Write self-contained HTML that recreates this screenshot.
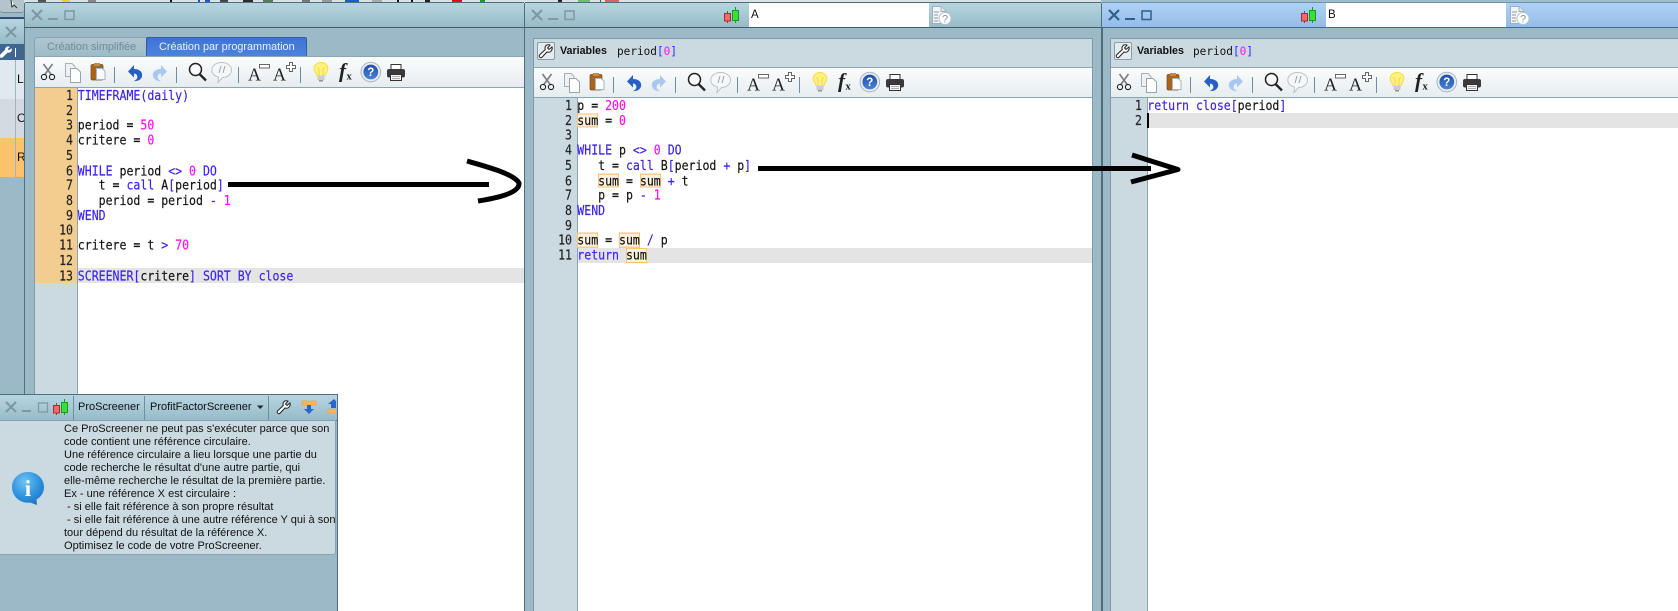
<!DOCTYPE html>
<html><head><meta charset="utf-8"><style>
html,body{margin:0;padding:0}
body{width:1678px;height:611px;overflow:hidden;position:relative;background:#9bb9c7;font-family:"Liberation Sans",sans-serif;color:#111}
.a{position:absolute}
.tb{position:absolute;height:24px;background:linear-gradient(#b6d5e1,#98bbc9);border-top:1px solid #4e6e7e;border-bottom:1px solid #3f5f6e;box-sizing:content-box}
.mono{font-family:"DejaVu Sans Mono","Liberation Mono",monospace;font-size:11.56px;line-height:15px;white-space:pre;color:#111}
.code{line-height:12.712px;transform:scaleY(1.18);transform-origin:0 0;-webkit-text-stroke:.15px currentColor}
.ln{text-align:right;color:#222}
.k{color:#3a22f5}.n{color:#ff10f0}
.s{display:inline-block;height:12.712px;line-height:12.712px;background:#fcf1df;box-shadow:inset 0 0 0 1px #fcc27a}
.panel{background:#cbdae1}
.var{background:#cbdae1;border:1px solid #7d9bab;border-bottom:1px solid #9db5c1;box-sizing:border-box}
.bar{background:linear-gradient(#fbfcfc,#e6edf0);border-top:1px solid #8aa6b3;border-bottom:1px solid #8aa6b3;box-sizing:border-box}
</style></head><body>

<!-- top strip -->
<div class="a" style="left:0;top:0;width:1678px;height:3px;background:#d9e2e6"></div>
<div class="a" style="left:1101px;top:0;width:577px;height:3px;background:#9fbccb"></div>
<div class="a" style="left:38px;top:0;width:8px;height:2px;background:#555"></div>
<div class="a" style="left:62px;top:0;width:8px;height:2px;background:#f1cf2e"></div>
<div class="a" style="left:88px;top:0;width:8px;height:2px;background:#888"></div>
<div class="a" style="left:170px;top:0;width:2px;height:3px;background:#111"></div>
<div class="a" style="left:198px;top:0;width:2px;height:3px;background:#1b54d0"></div>
<div class="a" style="left:205px;top:0;width:5px;height:2px;background:#2256c8"></div>
<div class="a" style="left:220px;top:0;width:8px;height:2px;background:#444"></div>
<div class="a" style="left:243px;top:0;width:10px;height:2px;background:#2b2b2b"></div>
<div class="a" style="left:263px;top:0;width:10px;height:2px;background:#557f55"></div>
<div class="a" style="left:302px;top:0;width:8px;height:2px;background:#777"></div>
<div class="a" style="left:322px;top:0;width:10px;height:2px;background:#999"></div>
<div class="a" style="left:345px;top:0;width:14px;height:2px;background:#1d5ad8"></div>
<div class="a" style="left:372px;top:0;width:10px;height:2px;background:#aaa"></div>
<div class="a" style="left:397px;top:0;width:2px;height:3px;background:#111"></div>
<div class="a" style="left:411px;top:0;width:2px;height:3px;background:#111"></div>
<div class="a" style="left:425px;top:0;width:5px;height:2px;background:#222"></div>
<div class="a" style="left:452px;top:0;width:10px;height:2px;background:#e01010"></div>
<div class="a" style="left:480px;top:0;width:5px;height:2px;background:#1b9a20"></div>
<div class="a" style="left:558px;top:0;width:4px;height:3px;background:#222"></div>
<div class="a" style="left:578px;top:0;width:12px;height:2px;background:#6ec06a"></div>
<div class="a" style="left:600px;top:0;width:1px;height:3px;background:#555"></div>
<div class="a" style="left:605px;top:0;width:14px;height:2px;background:#e06060"></div>

<!-- left background window -->
<div class="a" style="left:0;top:0;width:24px;height:13px;background:#b4c4cc;border-bottom:1px solid #7b919c;border-radius:0 0 3px 3px;box-sizing:border-box"></div>
<svg class="a" style="left:9px;top:0" width="10" height="9"><path d="M2 0 L3 7 L5 5 L8 8" fill="#fff" stroke="#333" stroke-width="1"/></svg>
<div class="a" style="left:0;top:17px;width:24px;height:2px;background:#2f4f73"></div>
<div class="a" style="left:0;top:19px;width:24px;height:25px;background:linear-gradient(#b6d5e1,#98bbc9)"></div>
<svg class="a" style="left:5px;top:26px" width="12" height="12"><path d="M1 1L11 11M11 1L1 11" stroke="#7f98a4" stroke-width="2.2"/></svg>
<div class="a" style="left:0;top:44px;width:24px;height:16px;background:#3f668f"></div>
<svg class="a" style="left:0;top:46px" width="12" height="12"><path d="M11.500 2.500L9 4.500 7.500 3 9.700 1C7.500-.2 5 1.500 5.200 3.800L0 9V11.500H2.500L7.500 6.500C10 7 12.500 5 11.500 2.500Z" fill="#fff" stroke="#dfe7ee" stroke-width=".5"/></svg>
<div class="a" style="left:15px;top:48px;width:1px;height:9px;background:#fff"></div>
<div class="a" style="left:0;top:60px;width:24px;height:39px;background:#dfe9ee"></div>
<div class="a" style="left:0;top:99px;width:24px;height:39px;background:#d3dae1"></div>
<div class="a" style="left:0;top:138px;width:24px;height:39px;background:#fdc26c"></div>
<div class="a" style="left:15px;top:60px;width:1px;height:117px;background:#a3b4bd"></div>
<div class="a" style="left:17px;top:72px;width:7px;height:15px;overflow:hidden;font-size:12px;line-height:15px">L</div>
<div class="a" style="left:17px;top:111px;width:7px;height:15px;overflow:hidden;font-size:12px;line-height:15px">O</div>
<div class="a" style="left:17px;top:150px;width:7px;height:15px;overflow:hidden;font-size:12px;line-height:15px">R</div>

<!-- window 1 -->
<div class="tb" style="left:25px;top:2px;width:499px"></div>
<div class="a" style="left:34px;top:37px;width:113px;height:19px;background:linear-gradient(#afc6d1,#9fbbc8);border:1px solid #86a3b1;border-bottom:0;border-radius:3px 0 0 0;box-sizing:border-box;color:#6e8c9b;font-size:10.85px;line-height:18px;padding-left:12px;white-space:nowrap">Création simplifiée</div>
<div class="a" style="left:146px;top:37px;width:161px;height:19px;background:linear-gradient(#3f74d6,#4b82e0);border:1px solid #2f5ea8;border-bottom:0;border-radius:2px 2px 0 0;box-sizing:border-box;color:#e9f1fb;font-size:10.85px;line-height:18px;padding-left:12px;white-space:nowrap">Création par programmation</div>
<div class="a panel" style="left:34px;top:56px;width:490px;height:555px;border-left:1px solid #7d9bab;box-sizing:border-box"></div>
<div class="a bar" style="left:35px;top:56px;width:489px;height:32px"></div>
<div class="a" style="left:35px;top:88px;width:42px;height:195px;background:#f2cd8f"></div>
<div class="a" style="left:77px;top:88px;width:447px;height:523px;background:#fff;border-left:1px solid #8aa6b3;box-sizing:border-box"></div>
<div class="a" style="left:78px;top:268px;width:446px;height:15px;background:#e4e4e4"></div>
<div class="a mono code ln" style="left:35px;top:88px;width:38px">1
2
3
4
5
6
7
8
9
10
11
12
13</div>
<div class="a mono code" style="left:77.800px;top:88px"><span class="k">TIMEFRAME(daily)</span>

period = <span class="n">50</span>
critere = <span class="n">0</span>

<span class="k">WHILE</span> period <span class="k">&lt;&gt;</span> <span class="n">0</span> <span class="k">DO</span>
   t = <span class="k">call</span> A<span class="k">[</span>period<span class="k">]</span>
   period = period <span class="k">-</span> <span class="n">1</span>
<span class="k">WEND</span>

critere = t <span class="k">&gt;</span> <span class="n">70</span>

<span class="k">SCREENER[</span>critere<span class="k">]</span> <span class="k">SORT BY close</span></div>
<div class="a" style="left:24px;top:3px;width:1px;height:608px;background:#4f6e7e"></div>

<!-- window 2 -->
<div class="a" style="left:524px;top:3px;width:1px;height:608px;background:#4f6e7e"></div>
<div class="tb" style="left:525px;top:2px;width:576px"></div>
<div class="a" style="left:749px;top:3px;width:180px;height:24px;background:#fff;font-size:11.5px;line-height:24px;padding-left:2px;box-sizing:border-box">A</div>
<div class="a var" style="left:533px;top:38px;width:560px;height:30px"></div>
<div class="a" style="left:537px;top:42px;width:18px;height:18px;background:#e4ecef;border:1px solid #8a9ca6;border-radius:2px;box-sizing:border-box"></div>
<div class="a" style="left:560px;top:44px;font-weight:bold;font-size:10.7px;line-height:14px">Variables</div>
<div class="a mono" style="left:617px;top:44px;font-size:11.07px"><span>period</span><span class="k">[</span><span class="n">0</span><span class="k">]</span></div>
<div class="a panel" style="left:533px;top:67px;width:560px;height:544px;border-left:1px solid #7d9bab;border-right:1px solid #7d9bab;box-sizing:border-box"></div>
<div class="a bar" style="left:534px;top:67px;width:558px;height:31px"></div>
<div class="a" style="left:577px;top:98px;width:515px;height:513px;background:#fff;border-left:1px solid #8aa6b3;box-sizing:border-box"></div>
<div class="a" style="left:578px;top:248px;width:514px;height:15px;background:#e4e4e4"></div>
<div class="a mono code ln" style="left:534px;top:98px;width:38px">1
2
3
4
5
6
7
8
9
10
11</div>
<div class="a mono code" style="left:577.300px;top:98px">p = <span class="n">200</span>
<span class="s">sum</span> = <span class="n">0</span>

<span class="k">WHILE</span> p <span class="k">&lt;&gt;</span> <span class="n">0</span> <span class="k">DO</span>
   t = <span class="k">call</span> B<span class="k">[</span>period <span class="k">+</span> p<span class="k">]</span>
   <span class="s">sum</span> = <span class="s">sum</span> <span class="k">+</span> t
   p = p <span class="k">-</span> <span class="n">1</span>
<span class="k">WEND</span>

<span class="s">sum</span> = <span class="s">sum</span> <span class="k">/</span> p
<span class="k">return</span> <span class="s">sum</span></div>

<!-- window 3 -->
<div class="a" style="left:1101px;top:3px;width:2px;height:608px;background:#4f6e7e"></div>
<div class="tb" style="left:1102px;top:2px;width:576px;background:linear-gradient(#aed1f6,#95bce8);border-top-color:#6f93b5;border-bottom-color:#3f6a92"></div>
<div class="a" style="left:1326px;top:3px;width:180px;height:24px;background:#fff;font-size:11.5px;line-height:24px;padding-left:2px;box-sizing:border-box">B</div>
<div class="a var" style="left:1110px;top:38px;width:572px;height:30px"></div>
<div class="a" style="left:1114px;top:42px;width:18px;height:18px;background:#e4ecef;border:1px solid #8a9ca6;border-radius:2px;box-sizing:border-box"></div>
<div class="a" style="left:1137px;top:44px;font-weight:bold;font-size:10.7px;line-height:14px">Variables</div>
<div class="a mono" style="left:1193px;top:44px;font-size:11.07px"><span>period</span><span class="k">[</span><span class="n">0</span><span class="k">]</span></div>
<div class="a panel" style="left:1110px;top:67px;width:568px;height:544px;border-left:1px solid #7d9bab;box-sizing:border-box"></div>
<div class="a bar" style="left:1111px;top:67px;width:567px;height:31px"></div>
<div class="a" style="left:1147px;top:98px;width:531px;height:513px;background:#fff;border-left:1px solid #8aa6b3;box-sizing:border-box"></div>
<div class="a" style="left:1148px;top:113px;width:530px;height:15px;background:#e4e4e4"></div>
<div class="a" style="left:1147px;top:113px;width:2px;height:15px;background:#000"></div>
<div class="a mono code ln" style="left:1111px;top:98px;width:31px">1
2</div>
<div class="a mono code" style="left:1147.300px;top:98px"><span class="k">return close[</span>period<span class="k">]</span></div>

<!-- icons -->
<svg class="a" style="left:0;top:0;z-index:1" width="1678" height="611" viewBox="0 0 1678 611">
<defs>
<radialGradient id="ib" cx=".4" cy=".3" r=".8"><stop offset="0" stop-color="#6fc5f2"/><stop offset=".6" stop-color="#2b8fdc"/><stop offset="1" stop-color="#1c6cbc"/></radialGradient>
<linearGradient id="hb" x1="0" y1="0" x2="0" y2="1"><stop offset="0" stop-color="#1f4fa8"/><stop offset="1" stop-color="#4c82d6"/></linearGradient>
<g id="x"><path d="M0 0L10 10M10 0L0 10" stroke-width="2.2" fill="none"/></g>
<g id="candles">
<path d="M3.500 4V16" stroke="#b03030" stroke-width="1"/>
<rect x=".5" y="6.500" width="6" height="7.500" fill="#f06a6a" stroke="#b02a2a"/>
<path d="M11.500 0V16" stroke="#14a014" stroke-width="1"/>
<rect x="8.500" y="3.500" width="6" height="10" fill="#3fdc3f" stroke="#14a014"/>
</g>
<g id="doc">
<path d="M.5 .5H9L14 5.500V17.500H.5Z" fill="#f1f5f7" stroke="#9fb0ba"/>
<path d="M9 .5V5.500H14" fill="#dfe6ea" stroke="#9fb0ba"/>
<path d="M2 6H7M2 9H6M2 12H6M2 15H6" stroke="#8a9aa4"/>
<circle cx="13" cy="12.500" r="6" fill="#fff" stroke="#b7c5cd"/>
<text x="13" y="16.500" text-anchor="middle" font-family="Liberation Sans" font-size="11" fill="#8897a0">?</text>
</g>
<path id="wr" d="M13 3 L10 5.500 L8.500 4 L11 1.200 C8.500 0 6 1.500 6 4 C6 5 6.300 5.500 6.300 5.500 L1 10.500 C0 11.500 0 12.500 .7 13.200 C1.500 14 2.500 13.800 3.200 13 L8 8 C8 8 9 8.300 9.800 8.200 C12 8 13.800 5.500 13 3 Z" fill="#fff" stroke="#222" stroke-width="1"/>
<g id="tools">
<!-- scissors -->
<path d="M43.500 64L51.500 75M52.500 64L44.500 75" stroke="#7c7c7c" stroke-width="1.600"/>
<circle cx="44" cy="77" r="2.600" fill="none" stroke="#222" stroke-width="1.100"/>
<circle cx="52" cy="77" r="2.600" fill="none" stroke="#222" stroke-width="1.100"/>
<!-- copy -->
<path d="M65.500 63.500H72L75 66.500V76.500H65.500Z" fill="#eef2f4" stroke="#a5b0b6"/>
<path d="M70.500 68.500H77L80.500 72V82.500H70.500Z" fill="#fdfdfd" stroke="#98a4ab"/>
<!-- paste -->
<rect x="91" y="64.500" width="12" height="15.500" rx="1.500" fill="#a8651f" stroke="#7b4612" stroke-width=".7"/>
<rect x="94" y="63" width="6" height="3" fill="#c58a48"/>
<path d="M96.500 68.500H102L105 71V79.500H96.500Z" fill="#fbfcfc" stroke="#aab4ba"/>
<!-- sep -->
<path d="M114.500 67V83M176.500 67V83M238.500 67V83M300.500 67V83" stroke="#6f8e9d" stroke-width="1"/>
<!-- undo/redo -->
<path d="M128 71.500L134 65V69C140 69 143 72.500 142 76.500C141 80 137 81.500 134 81C137 79.500 138 77.500 137 75.500C136.500 74 135 73.500 134 73.500V77.500Z" fill="#2660c6"/>
<path d="M167 71.500L161 65V69C155 69 152 72.500 153 76.500C154 80 158 81.500 161 81C158 79.500 157 77.500 158 75.500C158.500 74 160 73.500 161 73.500V77.500Z" fill="#aac8ee"/>
<!-- magnifier -->
<circle cx="195.500" cy="69.500" r="6" fill="#fbfdfd" stroke="#222" stroke-width="1.500"/>
<path d="M199.500 74L206 80.500" stroke="#222" stroke-width="2.300"/>
<!-- comment -->
<path d="M221.500 62.500C227.500 62.500 231.500 66 231.500 70C231.500 74.500 227 77.500 222.500 77.500L218 82.500L218.500 77C214.500 76 211.800 73.500 211.800 70C211.800 66 215.500 62.500 221.500 62.500Z" fill="#f6f7f8" stroke="#bcc3c7" stroke-width="1"/>
<path d="M219 73L221 66M223 73L225 66" stroke="#9aa3a8" stroke-width="1"/>
<!-- A- A+ -->
<text x="248" y="80.500" font-family="Liberation Serif" font-size="18" fill="#222">A</text>
<rect x="259.500" y="64.500" width="10" height="3.500" fill="#fff" stroke="#666"/>
<text x="273" y="80.500" font-family="Liberation Serif" font-size="18" fill="#222">A</text>
<path d="M289.500 62.500H292.500V65.500H295.500V68.500H292.500V71.500H289.500V68.500H286.500V65.500H289.500Z" fill="#fff" stroke="#666"/>
<!-- bulb -->
<path d="M321 62.500C325 62.500 327.800 65.200 327.800 68.800C327.800 71.500 325.500 73 324.800 76H317.200C316.500 73 314.200 71.500 314.200 68.800C314.200 65.200 317 62.500 321 62.500Z" fill="#fff27f" stroke="#f2dd45" stroke-width="1"/>
<path d="M319 76V69L317.500 67.500M323 76V69L324.500 67.500" stroke="#e6c92e" stroke-width=".7" fill="none"/>
<rect x="317.500" y="76" width="7" height="4" fill="#c7cdd0"/>
<rect x="319" y="80" width="4" height="1.500" fill="#8c9296"/>
<!-- fx -->
<text x="339" y="77.500" font-family="Liberation Serif" font-style="italic" font-weight="bold" font-size="21" fill="#222">f</text>
<text x="346.500" y="79.500" font-family="Liberation Serif" font-weight="bold" font-size="10.500" fill="#222">x</text>
<!-- help -->
<circle cx="370.800" cy="72" r="9.800" fill="#e7edf2" stroke="#a9b4bc"/>
<circle cx="370.800" cy="72" r="7.400" fill="url(#hb)"/>
<text x="370.800" y="76" text-anchor="middle" font-family="Liberation Sans" font-weight="bold" font-size="11.500" fill="#fff">?</text>
<!-- print -->
<rect x="391" y="64.500" width="10" height="5" fill="#fff" stroke="#333"/>
<rect x="387" y="69" width="18" height="8.500" rx="2" fill="#3a3a3a"/>
<rect x="390.500" y="74.500" width="11" height="6" fill="#f4f4f4" stroke="#333"/>
<path d="M392 76.500H400M392 78.500H400" stroke="#999" stroke-width=".7"/>
</g>
</defs>
<use href="#tools"/>
<use href="#tools" x="499" y="10"/>
<use href="#tools" x="1076" y="10"/>
<use href="#x" x="32" y="10" stroke="#7f98a4"/>
<rect x="48" y="18" width="10" height="2" fill="#7f98a4"/>
<rect x="65" y="11" width="9" height="8.500" fill="none" stroke="#7f98a4" stroke-width="1.500"/>
<use href="#x" x="532" y="10" stroke="#7f98a4"/>
<rect x="548" y="18" width="10" height="2" fill="#7f98a4"/>
<rect x="565" y="11" width="9" height="8.500" fill="none" stroke="#7f98a4" stroke-width="1.500"/>
<use href="#x" x="1109" y="10" stroke="#2f5f8c"/>
<rect x="1125" y="18" width="10" height="2" fill="#2f5f8c"/>
<rect x="1142" y="11" width="9" height="8.500" fill="none" stroke="#2f5f8c" stroke-width="1.500"/>
<use href="#candles" x="724" y="7"/>
<use href="#candles" x="1301" y="7"/>
<use href="#doc" x="932" y="6"/>
<use href="#doc" x="1510" y="6"/>
<use href="#wr" x="539" y="44"/>
<use href="#wr" x="1116" y="44"/>
</svg>

<!-- bottom window -->
<div class="a" style="left:0;top:394px;width:338px;height:217px;background:#9bb9c7;border-right:1px solid #4f6e7e;border-top:1px solid #4f6e7e;box-sizing:border-box;z-index:2;overflow:hidden">
<div class="a" style="left:0;top:0;width:338px;height:25px;background:linear-gradient(#b6d5e1,#98bbc9);border-bottom:1px solid #57798a"></div>
<div class="a" style="left:73px;top:1px;width:1px;height:24px;background:#6f8e9d"></div>
<div class="a" style="left:144px;top:1px;width:1px;height:24px;background:#6f8e9d"></div>
<div class="a" style="left:268px;top:1px;width:1px;height:24px;background:#6f8e9d"></div>
<div class="a" style="left:78px;top:3px;font-size:11px;line-height:19px;white-space:nowrap">ProScreener</div>
<div class="a" style="left:150px;top:3px;font-size:11px;line-height:19px;white-space:nowrap">ProfitFactorScreener</div>
<div class="a" style="left:0;top:25px;width:336px;height:135px;background:#cbdae1;border:1px solid #86a3b1;border-left:0;border-radius:0 0 3px 0;box-sizing:border-box"></div>
<div class="a" style="left:64px;top:28px;font-size:11.03px;line-height:13px;white-space:pre;color:#111">Ce ProScreener ne peut pas s'exécuter parce que son
code contient une référence circulaire.
Une référence circulaire a lieu lorsque une partie du
code recherche le résultat d'une autre partie, qui
elle-même recherche le résultat de la première partie.
Ex - une référence X est circulaire :
 - si elle fait référence à son propre résultat
 - si elle fait référence à une autre référence Y qui à son
tour dépend du résultat de la référence X.
Optimisez le code de votre ProScreener.</div>
<svg class="a" style="left:0;top:0" width="336" height="160" viewBox="0 395 336 160">
<use href="#x" x="6" y="402" stroke="#7f98a4"/>
<rect x="22" y="410" width="9" height="2" fill="#7f98a4"/>
<rect x="38.500" y="403" width="9" height="9" fill="none" stroke="#7f98a4" stroke-width="1.300"/>
<use href="#candles" x="53" y="399"/>
<path d="M257 405.500H263.500L260.200 409Z" fill="#222"/>
<use href="#wr" x="277" y="400"/>
<rect x="302" y="401" width="14" height="4" fill="#fcb55c" stroke="#f0a040" stroke-width=".6"/>
<path d="M307 405H311V409H314L309 414L304 409H307Z" fill="#2a66cc"/>
<path d="M334 408H331V404L328 404L334 399L337 402V408Z" fill="#2a66cc"/>
<rect x="328" y="409" width="9" height="4" fill="#fcb55c" stroke="#f0a040" stroke-width=".6"/>
<path d="M28 472C36.800 472 44 478.500 44 487C44 492.500 41 497 36.500 499.500L37 505L30 502.500C29 502.700 28.500 502.700 28 502.700C19 502.700 12 495.700 12 487C12 478.500 19 472 28 472Z" fill="url(#ib)"/>
<text x="28" y="496" text-anchor="middle" font-family="Liberation Serif" font-weight="bold" font-size="23" fill="#fff">i</text>
</svg>
</div>

<!-- hand-drawn arrows -->
<svg class="a" style="left:0;top:0;z-index:3" width="1678" height="611" viewBox="0 0 1678 611">
<rect x="228" y="182" width="261" height="5" fill="#000"/>
<path d="M467 161C488 167 514 174 519 183C520 193 497 198 478 201" fill="none" stroke="#000" stroke-width="5"/>
<rect x="758" y="166" width="393" height="5" fill="#000"/>
<path d="M1132 155L1178 169.500L1131 182" fill="none" stroke="#000" stroke-width="5" stroke-linejoin="round"/>
</svg>
</body></html>
